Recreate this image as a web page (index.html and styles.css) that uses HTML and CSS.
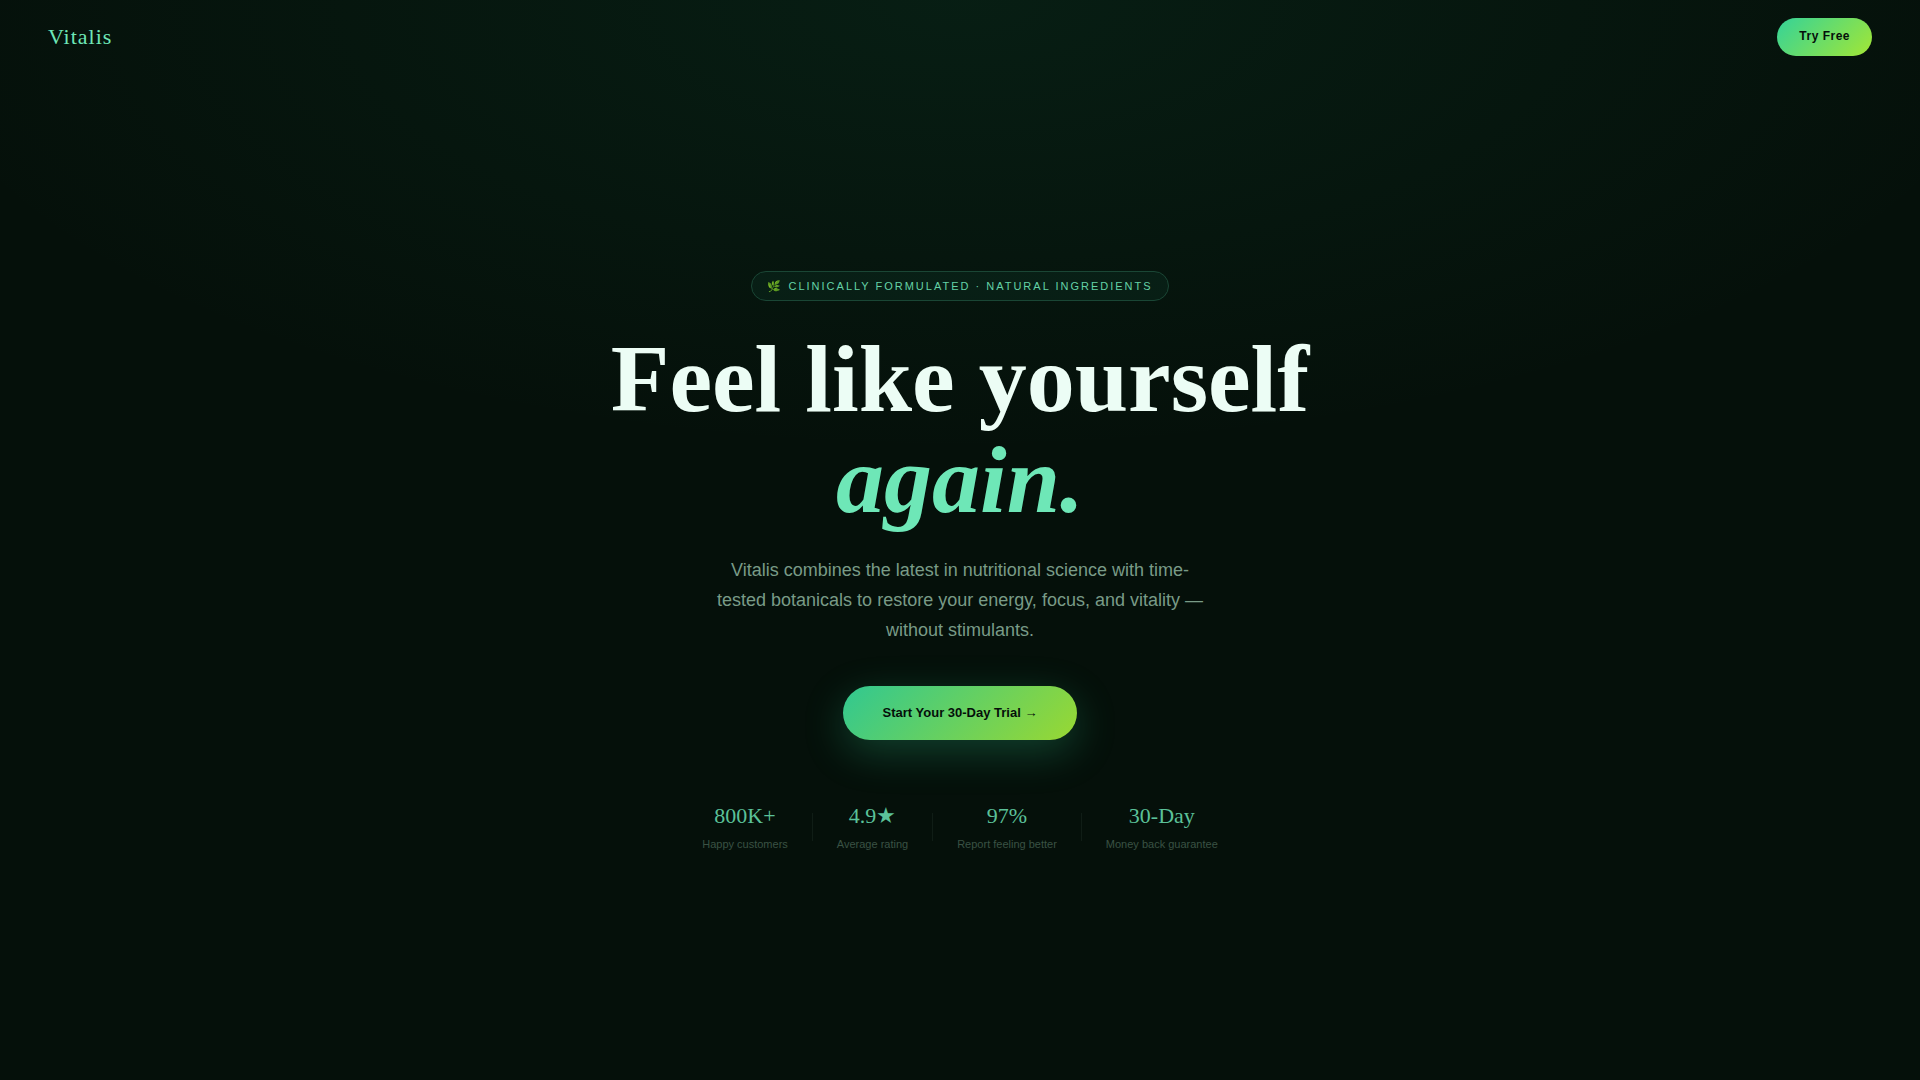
FILE: index.html
```html
<!DOCTYPE html>
<html lang="en">
<head>
<meta charset="utf-8">
<meta name="viewport" content="width=device-width, initial-scale=1">
<title>Vitalis</title>
<link rel="stylesheet" href="styles.css">
</head>
<body>
<header class="nav">
  <a class="logo" href="#">Vitalis</a>
  <button class="btn btn-small" type="button">Try Free</button>
</header>
<main class="hero">
  <p class="badge">🌿 Clinically formulated · Natural ingredients</p>
  <h1 class="title">Feel like yourself <em>again.</em></h1>
  <p class="lead">Vitalis combines the latest in nutritional science with time-tested botanicals to restore your energy, focus, and vitality — without stimulants.</p>
  <button class="btn btn-large" type="button">Start Your 30-Day Trial →</button>
  <ul class="stats">
    <li class="stat"><strong class="value">800K+</strong><span class="label">Happy customers</span></li>
    <li class="divider" aria-hidden="true"></li>
    <li class="stat"><strong class="value">4.9★</strong><span class="label">Average rating</span></li>
    <li class="divider" aria-hidden="true"></li>
    <li class="stat"><strong class="value">97%</strong><span class="label">Report feeling better</span></li>
    <li class="divider" aria-hidden="true"></li>
    <li class="stat"><strong class="value">30-Day</strong><span class="label">Money back guarantee</span></li>
  </ul>
</main>
</body>
</html>
```
FILE: styles.css
```css
* { box-sizing: border-box; margin: 0; padding: 0; }

body {
  display: flex;
  flex-direction: column;
  min-height: 100vh;
  background: radial-gradient(ellipse 80% 60% at 50% 0%, rgba(30, 170, 115, 0.09), transparent 70%) #05100a;
  color: #ecfdf5;
  font-family: "Liberation Sans", Arial, sans-serif;
}

.nav {
  display: flex;
  align-items: center;
  justify-content: space-between;
  padding: 18px 48px;
}

.logo {
  color: #6ee7b7;
  font-family: "Liberation Serif", Georgia, serif;
  font-size: 22px;
  letter-spacing: 1px;
  text-decoration: none;
}

.btn {
  border: 0;
  border-radius: 100px;
  background: linear-gradient(135deg, #34d399, #a3e635);
  color: #050f0a;
  font-family: inherit;
  font-weight: 700;
  cursor: pointer;
}

.btn-small {
  padding: 11px 22px 13px;
  font-size: 12px;
  line-height: 14px;
  letter-spacing: 0.5px;
}

.hero {
  flex: 1;
  display: flex;
  flex-direction: column;
  align-items: center;
  justify-content: center;
  padding: 0 24px 32px;
  text-align: center;
}

.badge {
  margin-bottom: 27px;
  padding: 8px 15px;
  border: 1px solid #1a4635;
  border-radius: 100px;
  background: rgba(52, 211, 153, 0.06);
  color: #64d2a6;
  font-size: 11px;
  line-height: 12px;
  letter-spacing: 2px;
  text-transform: uppercase;
}

.title {
  max-width: 800px;
  margin-bottom: 25px;
  font-family: "Liberation Serif", Georgia, serif;
  font-size: 96px;
  line-height: 101px;
}

.title em { color: #6ee7b7; }

.lead {
  max-width: 500px;
  margin-bottom: 41px;
  color: #799b87;
  font-size: 18px;
  line-height: 30px;
}

.btn-large {
  padding: 19px 40px;
  background: linear-gradient(135deg, #31c891, #99d832);
  box-shadow: 0 12px 40px rgba(52, 211, 153, 0.25);
  font-size: 13px;
  line-height: 16px;
}

.stats {
  display: flex;
  align-items: center;
  gap: 24px;
  margin-top: 63px;
  list-style: none;
}

.stat {
  display: flex;
  flex-direction: column;
  gap: 9px;
}

.value {
  color: #5bc199;
  font-family: "Liberation Serif", Georgia, serif;
  font-size: 22px;
  font-weight: 400;
  line-height: 26px;
}

.label {
  color: #3a5244;
  font-size: 11px;
  line-height: 13px;
}

.divider {
  width: 1px;
  height: 28px;
  background: #101d16;
}
```
